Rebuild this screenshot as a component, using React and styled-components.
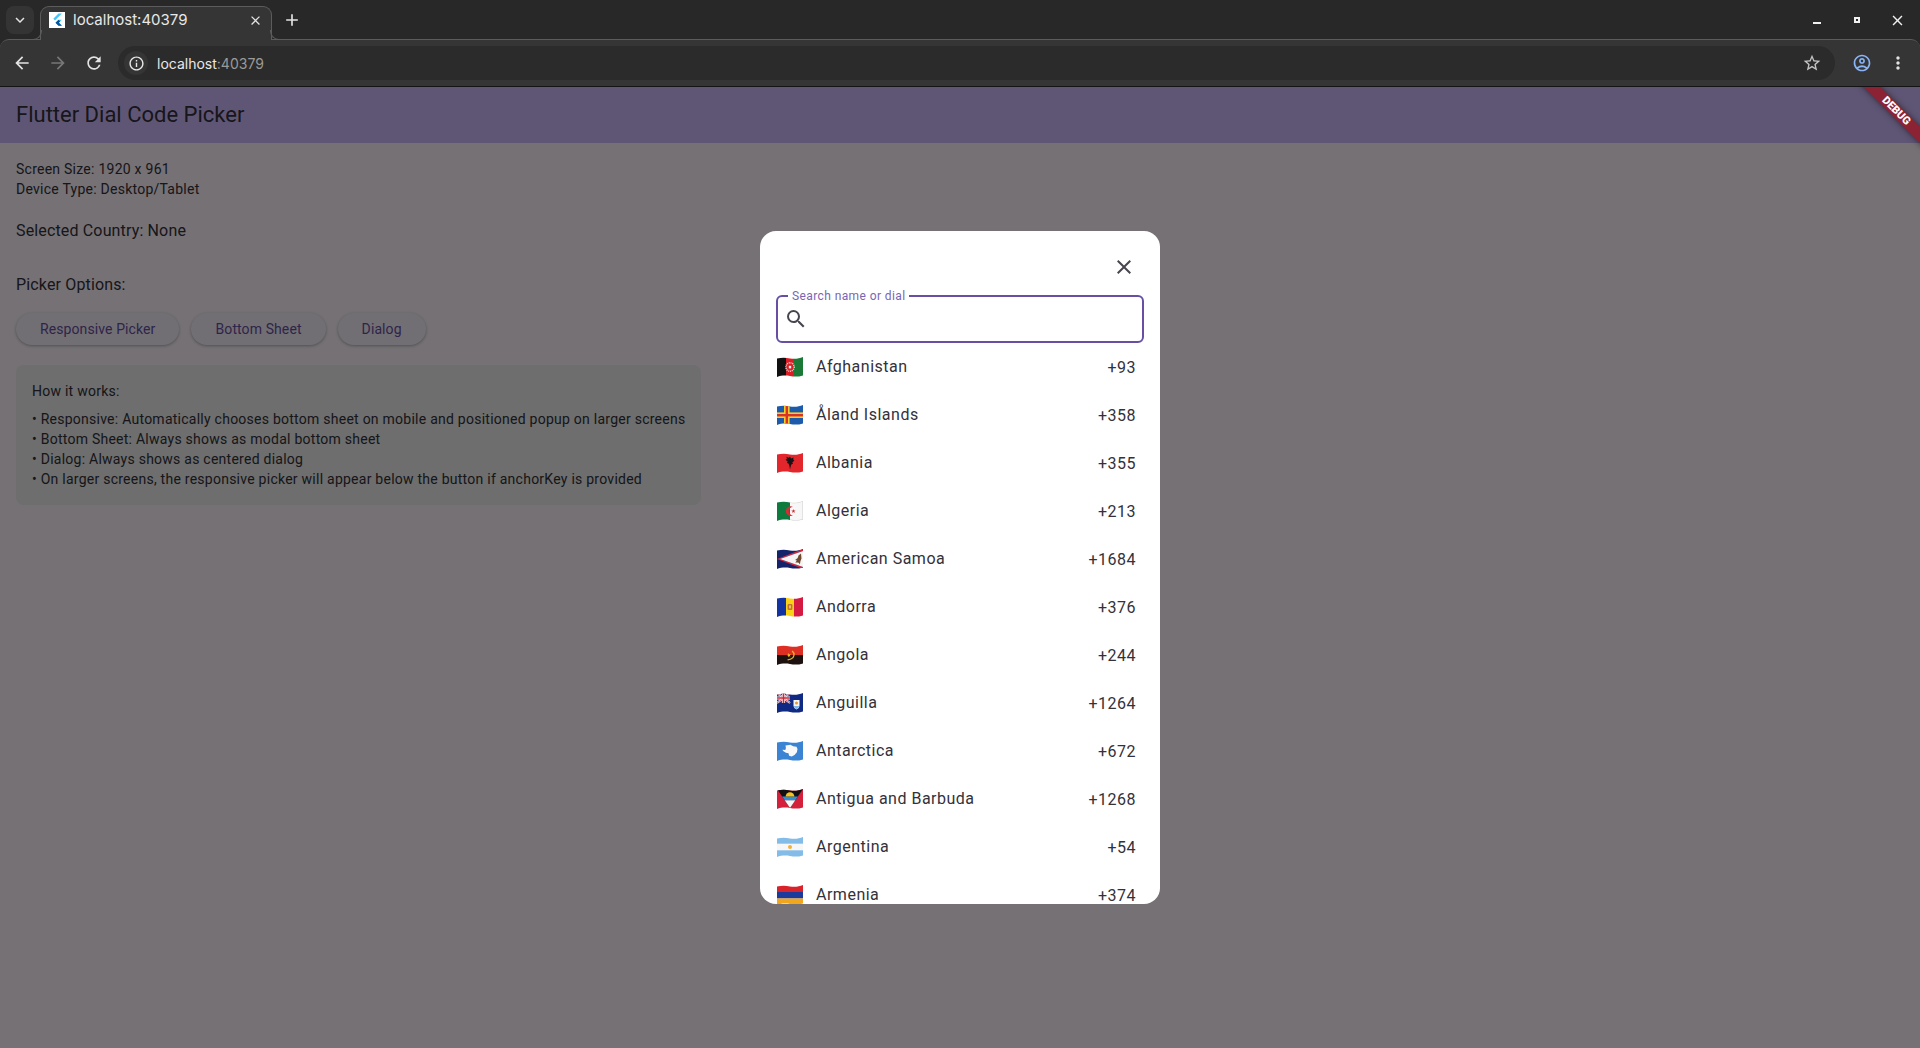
import React from 'react'
import styled, { createGlobalStyle } from 'styled-components'
import {
  MdAdd,
  MdArrowBack,
  MdArrowForward,
  MdClose,
  MdKeyboardArrowDown,
  MdMoreVert,
  MdOutlineAccountCircle,
  MdOutlineInfo,
  MdRefresh,
  MdSearch,
  MdStarOutline,
} from 'react-icons/md'

const GlobalStyle = createGlobalStyle`
  html, body {
    margin: 0;
    height: 100%;
    overflow: hidden;
    background: #282828;
  }
  * {
    box-sizing: border-box;
  }
`

const Page = styled.div`
  width: 1920px;
  height: 1048px;
  display: flex;
  flex-direction: column;
  background: #282828;
  font-family: Roboto, sans-serif;
`

/* browser chrome */

const TabStrip = styled.div`
  height: 40px;
  flex: none;
  display: flex;
  align-items: flex-start;
  background: #282828;
  padding: 6px 0 0 6px;
  font-family: Inter, sans-serif;
  color: #e8e8e8;
`

const TabSearch = styled.div`
  width: 28px;
  height: 28px;
  border-radius: 8px;
  background: #343434;
  display: flex;
  align-items: center;
  justify-content: center;
  font-size: 18px;
  color: #e3e3e3;
`

const Tab = styled.div`
  position: relative;
  z-index: 2;
  width: 232px;
  height: 34px;
  margin-left: 6px;
  padding: 0 8px 7px;
  display: flex;
  align-items: center;
  gap: 8px;
  background: #353535;
  border: 1px solid #5c5c5c;
  border-bottom: none;
  border-radius: 9px 9px 0 0;
  font-size: 15px;

  &::before,
  &::after {
    content: '';
    position: absolute;
    bottom: 0;
    width: 9px;
    height: 9px;
    border-bottom: 1px solid #5c5c5c;
  }
  &::before {
    left: -9px;
    border-right: 1px solid #5c5c5c;
    border-bottom-right-radius: 9px;
  }
  &::after {
    right: -9px;
    border-left: 1px solid #5c5c5c;
    border-bottom-left-radius: 9px;
  }
`

const TabTitle = styled.span`
  flex: 1;
  white-space: nowrap;
  margin-bottom: 1px;
`

const TabClose = styled.span`
  display: flex;
  font-size: 15px;
  color: #e3e3e3;
`

const NewTab = styled.span`
  display: flex;
  font-size: 20px;
  margin: 4px 0 0 10px;
  color: #e3e3e3;
`

const WindowControls = styled.div`
  margin-left: auto;
  margin-right: 3px;
  display: flex;
  height: 28px;
  align-items: center;
`

const WindowControl = styled.div`
  width: 40px;
  display: flex;
  justify-content: center;
  align-items: center;
  color: #f0f0f0;
  font-size: 17px;
`

const MinimizeGlyph = styled.i`
  width: 8px;
  height: 2px;
  background: #f0f0f0;
  margin-top: 6px;
`

const MaximizeGlyph = styled.i`
  width: 6px;
  height: 6px;
  border: 2px solid #f0f0f0;
`

const Toolbar = styled.div`
  height: 48px;
  flex: none;
  display: flex;
  align-items: center;
  background: #353535;
  border-top: 1px solid #5c5c5c;
  border-bottom: 1px solid #141414;
  border-radius: 9px 9px 0 0;
  margin-top: -1px;
  padding: 0 4px;
  position: relative;
  z-index: 1;
`

const NavButton = styled.div`
  width: 36px;
  height: 36px;
  display: flex;
  align-items: center;
  justify-content: center;
  font-size: 20px;
  color: ${(props) => (props.$disabled ? '#777777' : '#e3e3e3')};
`

const Omnibox = styled.div`
  flex: 1;
  height: 34px;
  margin-left: 6px;
  margin-right: 9px;
  border-radius: 17px;
  background: #2b2b2b;
  display: flex;
  align-items: center;
  padding: 0 13px 0 5px;
  font-family: Inter, sans-serif;
  font-size: 14px;
  color: #e8e8e8;
`

const SiteInfo = styled.div`
  width: 24px;
  height: 24px;
  border-radius: 50%;
  background: #353535;
  display: flex;
  align-items: center;
  justify-content: center;
  font-size: 17px;
  margin: 0 9px 0 1px;
`

const Port = styled.span`
  color: #9a9a9a;
`

const Star = styled.div`
  margin-left: auto;
  display: flex;
  font-size: 20px;
  color: #c4c4c4;
`

const ProfileIcon = styled(NavButton)`
  color: #8ab4f8;
  font-size: 20px;
`

/* flutter app */

const AppArea = styled.div`
  position: relative;
  flex: 1;
  overflow: hidden;
  background: #fef7ff;
  color: #33313a;
`

const AppBar = styled.header`
  height: 56px;
  display: flex;
  align-items: center;
  padding: 0 16px 1px;
  background: #cfbcff;
  font-size: 22px;
`

const Content = styled.main`
  padding: 16px;
  font-size: 14px;
  line-height: 20px;
  letter-spacing: 0.25px;
`

const SectionLabel = styled.div`
  font-size: 16px;
  line-height: 24px;
  letter-spacing: 0.15px;
  margin-top: ${(props) => props.$top}px;
`

const ButtonRow = styled.div`
  display: flex;
  gap: 12px;
  margin-top: 16px;
`

const PickerButton = styled.button`
  height: 32px;
  padding: 0 24px;
  border: none;
  border-radius: 16px;
  background: #f7f2fa;
  color: #6750a4;
  font-family: inherit;
  font-size: 14px;
  font-weight: 400;
  letter-spacing: 0.1px;
  box-shadow: 0 1px 3px rgba(0, 0, 0, 0.3);
`

const InfoCard = styled.section`
  display: inline-block;
  margin-top: 20px;
  padding: 16px;
  border-radius: 8px;
  background: #edefed;
`

const InfoHeading = styled.div`
  margin-bottom: 8px;
`

const Barrier = styled.div`
  position: absolute;
  inset: 0;
  background: rgba(0, 0, 0, 0.54);
  display: flex;
  align-items: center;
  justify-content: center;
`

const Dialog = styled.div`
  width: 400px;
  height: 673px;
  border-radius: 16px;
  background: #ffffff;
  overflow: hidden;
  display: flex;
  flex-direction: column;
  padding: 16px 16px 0;
`

const DialogTop = styled.div`
  height: 40px;
  flex: none;
  display: flex;
  justify-content: flex-end;
  align-items: center;
  font-size: 24px;
  color: #49454f;
`

const CloseIcon = styled.span`
  width: 40px;
  height: 40px;
  display: flex;
  align-items: center;
  justify-content: center;
`

const SearchBox = styled.div`
  position: relative;
  flex: none;
  height: 48px;
  margin-top: 8px;
  border: 2px solid #6750a4;
  border-radius: 6px;
  display: flex;
  align-items: center;
  padding-left: 6px;
  font-size: 24px;
  color: #49454f;
`

const SearchLabel = styled.label`
  position: absolute;
  left: 10px;
  top: -9px;
  padding: 0 4px;
  background: #ffffff;
  color: #7a65b4;
  font-size: 12px;
  line-height: 16px;
  letter-spacing: 0.4px;
`

const CountryList = styled.div`
  flex: 1;
  min-height: 0;
  overflow: hidden;
`

const CountryRow = styled.div`
  height: 48px;
  display: flex;
  align-items: center;
  padding-right: 8px;
`

const FlagSvg = styled.svg`
  width: 26px;
  height: 20px;
  flex: none;
  margin: 0 13px 0 1px;
`

const CountryName = styled.span`
  flex: 1;
  font-size: 16px;
  letter-spacing: 0.5px;
  color: #33313a;
  margin-bottom: 1px;
`

const DialCode = styled.span`
  font-size: 16px;
  letter-spacing: 0.5px;
  color: #33313a;
  margin-top: 1px;
`

const DebugRibbon = styled.div`
  position: absolute;
  top: 18px;
  right: -36px;
  width: 120px;
  height: 12px;
  transform: rotate(45deg);
  background: #8b2334;
  box-shadow: 0 0 6px rgba(0, 0, 0, 0.5);
  color: #ffffff;
  font-size: 11px;
  font-weight: 900;
  line-height: 12px;
  text-align: center;
`

const FlutterMark = () => (
  <svg width="16" height="16" viewBox="0 0 16 16">
    <rect width="16" height="16" fill="#ffffff" />
    <path d="M9.5 1.5h3.4L6 8.4 4.3 6.7z" fill="#47c5fb" />
    <path d="M9.5 7.8h3.4L9.9 10.8l3 3H9.5l-3-3z" fill="#47c5fb" />
    <path d="M6.5 10.8l3-3 1.7 1.5-1.3 1.5 3 3H9.5z" fill="#00569e" />
  </svg>
)

const WAVE = 'M0 1.6C5 .2 9 .6 13 1.4S22 1.8 26 0V18.4C21 20 17 19.8 13 19S4 18.4 0 20Z'

const flagArt = {
  af: (
    <>
      <rect width="9" height="20" fill="#111" />
      <rect x="9" width="8" height="20" fill="#d81f26" />
      <rect x="17" width="9" height="20" fill="#1a7a35" />
      <circle cx="13" cy="10" r="4.2" fill="none" stroke="#f1d9d9" strokeWidth="1.4" strokeDasharray="1 .8" />
      <rect x="11.8" y="8.8" width="2.4" height="2.6" fill="#eeeeee" />
    </>
  ),
  ax: (
    <>
      <rect width="26" height="20" fill="#1c5bab" />
      <rect x="7" width="5.6" height="20" fill="#f6cc2d" />
      <rect y="7.4" width="26" height="5.6" fill="#f6cc2d" />
      <rect x="8.6" width="2.4" height="20" fill="#d8332a" />
      <rect y="9" width="26" height="2.4" fill="#d8332a" />
    </>
  ),
  al: (
    <>
      <rect width="26" height="20" fill="#e3262b" />
      <path d="M13 3.6l1 1.8 2.6-1-.5 2.2 1.3.4-1.2 1.8-.9.2.7 1.8-1.5.4-.8 2L13 16.4l-.7-3.9-.8-2-1.5-.4.7-1.8-.9-.2-1.2-1.8 1.3-.4-.5-2.2 2.6 1z" fill="#1a1214" />
    </>
  ),
  dz: (
    <>
      <rect width="13" height="20" fill="#0d7a3e" />
      <rect x="13" width="13" height="20" fill="#f7f7f7" />
      <path d="M15.9 5.9a4.8 4.8 0 1 0 0 8.4 3.9 3.9 0 1 1 0-8.4z" fill="#d62d35" />
      <path d="M16.4 7.9l.6 1.5 1.6 0-1.3 1 .5 1.5-1.4-.9-1.3.9.5-1.5-1.3-1 1.6 0z" fill="#d62d35" />
      <path d={WAVE} fill="none" stroke="#cfcfcf" strokeWidth="1" clipPath="polygon(50% 0, 100% 0, 100% 100%, 50% 100%)" />
    </>
  ),
  as: (
    <>
      <rect width="26" height="20" fill="#14246b" />
      <path d="M26 0v2L3 10l23 8v2L0 10z" fill="#cf2a3c" />
      <path d="M26 2v16L3 10z" fill="#f5f5f5" />
      <path d="M24 4.5l-2.5 2-.8 2.5-2.6 2 1.8.6-1.6 1.8 3 .2 1.6 1.6.6-3.2 1-2.6z" fill="#6d4a2e" />
    </>
  ),
  ad: (
    <>
      <rect width="9" height="20" fill="#1233a0" />
      <rect x="9" width="8" height="20" fill="#fbd116" />
      <rect x="17" width="9" height="20" fill="#d41a41" />
      <rect x="10.6" y="7" width="4.8" height="6" rx="1.2" fill="#c2703a" />
      <rect x="12" y="8.4" width="2" height="3" fill="#e9c14f" />
    </>
  ),
  ao: (
    <>
      <rect width="26" height="10" fill="#dd2f24" />
      <rect y="10" width="26" height="10" fill="#1d1110" />
      <path d="M15.6 5.6a5 5 0 0 1-1.4 8.8l-3.4 1-.5-1 3.4-1a3.9 3.9 0 0 0 1-6.9z" fill="#e8b81f" />
      <path d="M11.3 8l1 1.2 1.4-.1-.8 1.2.6 1.3-1.4-.4-1 1 0-1.4-1.2-.7 1.3-.5z" fill="#e8b81f" />
    </>
  ),
  ai: (
    <>
      <rect width="26" height="20" fill="#102a84" />
      <rect width="13" height="10" fill="#27367f" />
      <path d="M0 0l13 10M13 0L0 10" stroke="#f4f4f4" strokeWidth="2" />
      <path d="M0 0l13 10M13 0L0 10" stroke="#d4263a" strokeWidth=".8" />
      <path d="M6.5 0v10M0 5h13" stroke="#f4f4f4" strokeWidth="3.2" />
      <path d="M6.5 0v10M0 5h13" stroke="#d4263a" strokeWidth="1.6" />
      <path d="M16.5 7h6v5.5c0 2-1.4 3.2-3 4-1.6-.8-3-2-3-4z" fill="#f5f5f5" />
      <path d="M16.8 13h5.4c-.3 1.5-1.4 2.5-2.7 3.2-1.3-.7-2.4-1.7-2.7-3.2z" fill="#7fb6e6" />
      <circle cx="19.5" cy="10" r="1.5" fill="#e69a2f" />
    </>
  ),
  aq: (
    <>
      <rect width="26" height="20" fill="#3b84d4" />
      <path d="M8.5 4.5l5-.8 2.6 1.6 3.4.4 1 2.4-.6 3.2-2.4 2.6-2.8 1.6-2.6-.8-.6-2.4-2.6-.6-2.4-1.4-1.2-1.6 3 .2.6-2z" fill="#f8f8f8" />
    </>
  ),
  ag: (
    <>
      <rect width="26" height="20" fill="#d5203b" />
      <path d="M0 0h26L13 19z" fill="#111111" />
      <path d="M5.2 7.6h15.6l-2.5 3.6H7.7z" fill="#2f8fdd" />
      <path d="M7.7 11.2h10.6L13 19z" fill="#f6f6f6" />
      <path d="M8.6 7.6a4.4 4.4 0 0 1 8.8 0z" fill="#f6c21c" />
    </>
  ),
  ar: (
    <>
      <rect width="26" height="20" fill="#84bce8" />
      <rect y="6.7" width="26" height="6.6" fill="#f7f7f7" />
      <circle cx="13" cy="10" r="2" fill="#f1b13a" />
    </>
  ),
  am: (
    <>
      <rect width="26" height="7" fill="#d8232a" />
      <rect y="7" width="26" height="6.5" fill="#1c3a9c" />
      <rect y="13.5" width="26" height="6.5" fill="#f2a61e" />
    </>
  ),
}

const Flag = ({ code }) => (
  <FlagSvg viewBox="0 0 26 20">
    <defs>
      <clipPath id={`wave-${code}`}>
        <path d={WAVE} />
      </clipPath>
    </defs>
    <g clipPath={`url(#wave-${code})`}>{flagArt[code]}</g>
  </FlagSvg>
)

const countries = [
  { code: 'af', name: 'Afghanistan', dial: '+93' },
  { code: 'ax', name: 'Åland Islands', dial: '+358' },
  { code: 'al', name: 'Albania', dial: '+355' },
  { code: 'dz', name: 'Algeria', dial: '+213' },
  { code: 'as', name: 'American Samoa', dial: '+1684' },
  { code: 'ad', name: 'Andorra', dial: '+376' },
  { code: 'ao', name: 'Angola', dial: '+244' },
  { code: 'ai', name: 'Anguilla', dial: '+1264' },
  { code: 'aq', name: 'Antarctica', dial: '+672' },
  { code: 'ag', name: 'Antigua and Barbuda', dial: '+1268' },
  { code: 'ar', name: 'Argentina', dial: '+54' },
  { code: 'am', name: 'Armenia', dial: '+374' },
]

const notes = [
  '• Responsive: Automatically chooses bottom sheet on mobile and positioned popup on larger screens',
  '• Bottom Sheet: Always shows as modal bottom sheet',
  '• Dialog: Always shows as centered dialog',
  '• On larger screens, the responsive picker will appear below the button if anchorKey is provided',
]

const App = () => (
  <Page>
    <GlobalStyle />
    <TabStrip>
      <TabSearch>
        <MdKeyboardArrowDown />
      </TabSearch>
      <Tab>
        <FlutterMark />
        <TabTitle>localhost:40379</TabTitle>
        <TabClose>
          <MdClose />
        </TabClose>
      </Tab>
      <NewTab>
        <MdAdd />
      </NewTab>
      <WindowControls>
        <WindowControl>
          <MinimizeGlyph />
        </WindowControl>
        <WindowControl>
          <MaximizeGlyph />
        </WindowControl>
        <WindowControl>
          <MdClose />
        </WindowControl>
      </WindowControls>
    </TabStrip>
    <Toolbar>
      <NavButton>
        <MdArrowBack />
      </NavButton>
      <NavButton $disabled>
        <MdArrowForward />
      </NavButton>
      <NavButton>
        <MdRefresh />
      </NavButton>
      <Omnibox>
        <SiteInfo>
          <MdOutlineInfo />
        </SiteInfo>
        <span>
          localhost<Port>:40379</Port>
        </span>
        <Star>
          <MdStarOutline />
        </Star>
      </Omnibox>
      <ProfileIcon>
        <MdOutlineAccountCircle />
      </ProfileIcon>
      <NavButton>
        <MdMoreVert />
      </NavButton>
    </Toolbar>
    <AppArea>
      <AppBar>Flutter Dial Code Picker</AppBar>
      <Content>
        <div>Screen Size: 1920 x 961</div>
        <div>Device Type: Desktop/Tablet</div>
        <SectionLabel $top={20}>Selected Country: None</SectionLabel>
        <SectionLabel $top={30}>Picker Options:</SectionLabel>
        <ButtonRow>
          <PickerButton>Responsive Picker</PickerButton>
          <PickerButton>Bottom Sheet</PickerButton>
          <PickerButton>Dialog</PickerButton>
        </ButtonRow>
        <InfoCard>
          <InfoHeading>How it works:</InfoHeading>
          {notes.map((note) => (
            <div key={note}>{note}</div>
          ))}
        </InfoCard>
      </Content>
      <Barrier>
        <Dialog>
          <DialogTop>
            <CloseIcon>
              <MdClose />
            </CloseIcon>
          </DialogTop>
          <SearchBox>
            <SearchLabel>Search name or dial</SearchLabel>
            <MdSearch />
          </SearchBox>
          <CountryList>
            {countries.map((country) => (
              <CountryRow key={country.code}>
                <Flag code={country.code} />
                <CountryName>{country.name}</CountryName>
                <DialCode>{country.dial}</DialCode>
              </CountryRow>
            ))}
          </CountryList>
        </Dialog>
      </Barrier>
      <DebugRibbon>DEBUG</DebugRibbon>
    </AppArea>
  </Page>
)

export default App
